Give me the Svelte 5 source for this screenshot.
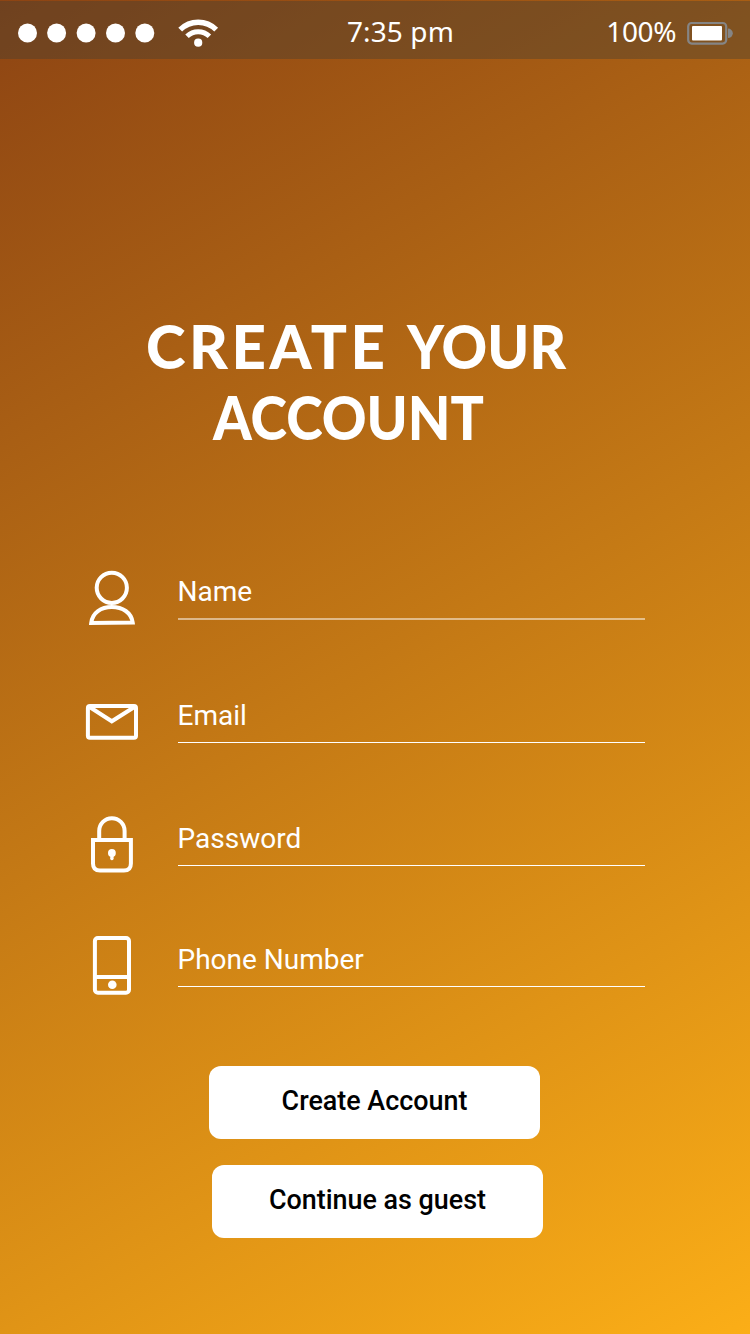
<script>
  const fields = [
    { id: 'name', label: 'Name', type: 'text' },
    { id: 'email', label: 'Email', type: 'email' },
    { id: 'password', label: 'Password', type: 'password' },
    { id: 'phone', label: 'Phone Number', type: 'tel' }
  ];
</script>

<main class="screen">
  <header class="status">
    <div class="signal">
      <svg class="dots" width="140" height="20" viewBox="0 0 140 20">
        {#each [9.5, 38.6, 68.1, 97.5, 126.8] as cx}
          <circle {cx} cy="10" r="9.5" />
        {/each}
      </svg>
      <svg width="42" height="30" viewBox="177 18 42 30">
        <path d="M180.2 29.7A25.5 25.5 0 0 1 216.2 29.7" class="wave" stroke-width="5.4" />
        <path d="M187 36.2A16.2 16.2 0 0 1 209.4 36.2" class="wave" stroke-width="5" />
        <circle cx="198.2" cy="42.7" r="4.1" />
      </svg>
    </div>
    <span class="time">7:35 pm</span>
    <div class="power">
      <span class="percent">100%</span>
      <svg class="battery" width="48" height="26" viewBox="686 20 48 26">
        <rect x="688.2" y="23" width="38" height="20.6" rx="3.5" class="shell" />
        <rect x="692" y="26" width="30" height="14.6" rx="1" />
        <path d="M728 28.5A4.8 4.8 0 0 1 728 38.1Z" class="nub" />
      </svg>
    </div>
  </header>

  <h1>
    <svg width="460" height="170" viewBox="127 298 460 170">
      <text x="146" y="369" textLength="239">CREATE</text>
      <text x="407" y="369" textLength="159" lengthAdjust="spacingAndGlyphs">YOUR</text>
      <text x="213" y="440" textLength="271" lengthAdjust="spacingAndGlyphs">ACCOUNT</text>
    </svg>
  </h1>

  <form>
    {#each fields as field}
      <label class="row {field.id}">
        <svg class="icon" width="60" height="60" viewBox="0 0 60 60">
          {#if field.id === 'name'}
            <circle cx="29.8" cy="19.8" r="15.1" />
            <path d="M9.2 54.9C10.5 44.5 19 39 29.8 39S49.3 44.5 50.7 54.5Z" />
          {:else if field.id === 'email'}
            <rect x="5.9" y="14" width="48.1" height="31.7" rx="2" />
            <path d="M8 15.3L29.8 29.3L52 15.3" />
          {:else if field.id === 'password'}
            <path d="M17.2 25V15.9A12.7 12.7 0 0 1 42.6 15.9V25" />
            <path d="M11 25H48.9V48.5Q48.9 55.6 42 55.6H18Q11 55.6 11 48.5Z" />
            <circle class="solid" cx="29.9" cy="38" r="3.9" />
            <path class="solid" d="M28.5 40H31.4L31.7 44Q29.9 46.5 28.1 44Z" />
          {:else}
            <rect x="12.9" y="2.1" width="34.1" height="54.7" rx="3" />
            <path d="M13 41H47" />
            <circle class="solid" cx="30.3" cy="48.7" r="4.3" />
          {/if}
        </svg>
        <input type={field.type} placeholder={field.label} />
      </label>
    {/each}
  </form>

  <div class="actions">
    <button class="create">Create Account</button>
    <button class="guest">Continue as guest</button>
  </div>
</main>

<style>
  .screen {
    box-sizing: border-box;
    width: 750px;
    height: 1334px;
    padding-top: 1px;
    overflow: hidden;
    display: flex;
    flex-direction: column;
    background: linear-gradient(150deg, #8d4413 0%, #fbae17 100%);
    color: #fff;
    font-family: Roboto, sans-serif;
  }
  svg {
    display: block;
    fill: #fff;
  }
  .status {
    height: 58px;
    flex: none;
    display: grid;
    grid-template-columns: 329px auto 1fr;
    align-items: center;
    box-sizing: border-box;
    padding: 2px 16px 0 18px;
    background: rgba(67, 62, 50, 0.4);
    font-family: 'Noto Sans', sans-serif;
    font-size: 28px;
    line-height: 40px;
  }
  .signal {
    display: flex;
    align-items: center;
    gap: 19px;
    padding-top: 3px;
  }
  .time {
    letter-spacing: 0.1px;
  }
  .power {
    display: flex;
    align-items: center;
    justify-content: flex-end;
    gap: 10px;
  }
  .battery {
    margin-top: 3px;
  }
  .percent {
    letter-spacing: -0.4px;
  }
  .wave {
    fill: none;
    stroke: #fff;
  }
  .shell {
    fill: none;
    stroke: #858585;
    stroke-width: 2.2;
  }
  .nub {
    fill: #858585;
  }
  h1 {
    margin: 239px 0 0 127px;
    font-family: Lato, sans-serif;
    font-size: 60px;
    font-weight: 900;
  }
  form {
    display: flex;
    flex-direction: column;
    margin: 100px 105px 0 82px;
  }
  .row {
    display: flex;
    gap: 35.5px;
    height: 60px;
    margin-bottom: 64px;
  }
  .email {
    margin-bottom: 63px;
  }
  .password {
    margin-bottom: 61px;
  }
  .phone {
    margin-bottom: 0;
  }
  .icon {
    flex: none;
    fill: none;
    stroke: #fff;
    stroke-width: 4;
  }
  .solid {
    fill: #fff;
    stroke: none;
  }
  input {
    flex: 1;
    min-width: 0;
    height: 51px;
    box-sizing: border-box;
    padding: 0 0 3px;
    border: 0;
    border-bottom: 1px solid #fff;
    border-radius: 0;
    outline: none;
    background: none;
    color: #fff;
    font: 400 28px Roboto, sans-serif;
  }
  .name input {
    height: 52px;
    padding-bottom: 4px;
    border-bottom: 2px solid rgba(255, 255, 255, 0.5);
  }
  input::placeholder {
    color: #fff;
    opacity: 1;
  }
  .actions {
    display: flex;
    flex-direction: column;
    gap: 26px;
    margin: 70px 0 0 209px;
  }
  button {
    width: 331px;
    height: 73px;
    padding: 0 0 4px;
    border: 0;
    border-radius: 12px;
    background: #fff;
    color: #000;
    font: 500 26.9px Roboto, sans-serif;
  }
  .guest {
    margin-left: 3px;
  }
</style>
